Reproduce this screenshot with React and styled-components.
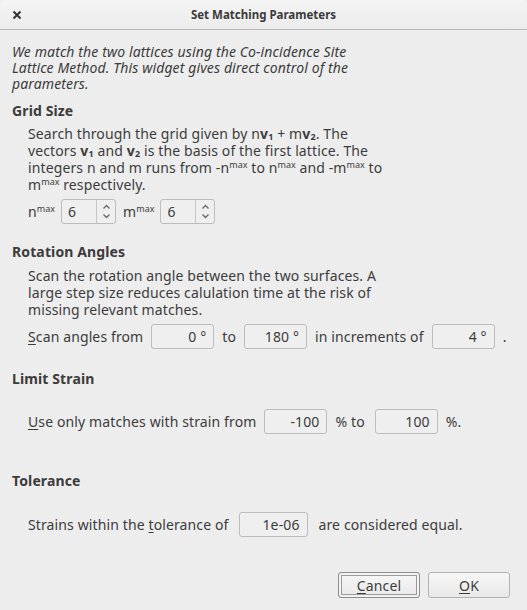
import React from "react";
import styled, { createGlobalStyle } from "styled-components";

const Global = createGlobalStyle`
  html, body { margin: 0; padding: 0; background: #ededed; }
  body {
    font-family: "Noto Sans", "DejaVu Sans", sans-serif;
    font-size: 14px;
    letter-spacing: 0.12px;
    color: #3c3c3c;
  }
`;

const Window = styled.div`
  width: 527px;
  height: 610px;
  display: flex;
  flex-direction: column;
  background: #ededed;
  overflow: hidden;
`;

const TitleBar = styled.div`
  height: 30px;
  flex: none;
  display: grid;
  grid-template-columns: 34px 1fr 34px;
  align-items: center;
  background: linear-gradient(#f4f4f4, #ececec);
  border-bottom: 1px solid #b8b8b8;
  border-radius: 5px 5px 0 0;
  box-sizing: border-box;
`;

const Close = styled.div`
  display: flex;
  justify-content: center;
  color: #3a3a3a;
`;

const Title = styled.div`
  text-align: center;
  font-weight: 700;
  font-size: 11.5px;
  letter-spacing: 0;
  color: #3a3a3a;
`;

const Body = styled.div`
  flex: 1;
  display: flex;
  flex-direction: column;
  padding: 14px 12px 12px;
`;

const Intro = styled.p`
  margin: 0;
  font-style: italic;
  line-height: 16px;
  white-space: nowrap;
`;

const Heading = styled.h2`
  margin: ${(p) => p.$top}px 0 0;
  font-size: 14px;
  font-weight: 700;
  line-height: 16px;
  color: #3c3c3c;
`;

const Para = styled.p`
  margin: ${(p) => p.$top || 6}px 0 0 16px;
  line-height: 17px;
  white-space: nowrap;
`;

const Row = styled.div`
  display: flex;
  align-items: center;
  margin: ${(p) => p.$top}px 0 0 16px;
  height: 25px;
`;

const Label = styled.span`
  margin-right: ${(p) => p.$gap || 8}px;
  white-space: nowrap;
`;

const Sup = styled.sup`
  font-size: 9px;
  letter-spacing: 0;
  vertical-align: 5px;
  line-height: 0;
`;

const Sub = styled.sub`
  font-size: 9px;
  vertical-align: -1px;
  line-height: 0;
`;

const Field = styled.div`
  box-sizing: border-box;
  width: ${(p) => p.$w}px;
  height: 25px;
  border: 1px solid #bcbcbc;
  border-radius: 3px;
  background: #efefef;
  display: flex;
  align-items: center;
  justify-content: flex-end;
  padding: 0 7px;
  margin-right: ${(p) => p.$gap || 8}px;
`;

const Spin = styled.div`
  box-sizing: border-box;
  width: 55px;
  height: 25px;
  border: 1px solid #bcbcbc;
  border-radius: 3px;
  background: #efefef;
  display: grid;
  grid-template-columns: 1fr 19px;
  margin-right: 7px;
`;

const SpinValue = styled.div`
  display: flex;
  align-items: center;
  padding-left: 6px;
`;

const SpinArrows = styled.div`
  border-left: 1px solid #c6c6c6;
  display: flex;
  flex-direction: column;
  align-items: center;
  justify-content: space-around;
  padding: 2px 0;
`;

const U = styled.span`
  text-decoration: underline;
  text-underline-offset: 2px;
`;

const Footer = styled.div`
  margin-top: auto;
  display: flex;
  justify-content: flex-end;
  gap: 8px;
  padding-right: 5px;
`;

const Button = styled.button`
  box-sizing: border-box;
  width: 82px;
  height: 26px;
  font: inherit;
  letter-spacing: inherit;
  color: #3c3c3c;
  border: 1px solid ${(p) => (p.$focus ? "#8e8e8e" : "#b2b2b2")};
  border-radius: 3px;
  background: linear-gradient(#f7f7f7, #e8e8e8);
  box-shadow: ${(p) => (p.$focus ? "inset 0 0 0 2px #f3f3f3, inset 0 0 0 3px #9a9a9a" : "none")};
  padding: 0;
`;

const Arrow = ({ up }) => (
  <svg width="9" height="6" viewBox="0 0 9 6">
    <path
      d={up ? "M1.5 4.5 L4.5 1.5 L7.5 4.5" : "M1.5 1.5 L4.5 4.5 L7.5 1.5"}
      fill="none"
      stroke="#6a6a6a"
      strokeWidth="1.4"
    />
  </svg>
);

const SpinBox = ({ value }) => (
  <Spin>
    <SpinValue>{value}</SpinValue>
    <SpinArrows>
      <Arrow up />
      <Arrow />
    </SpinArrows>
  </Spin>
);

const Max = () => <Sup>max</Sup>;

const V = ({ n }) => (
  <b>
    v<Sub>{n}</Sub>
  </b>
);

export default function App() {
  return (
    <>
      <Global />
      <Window>
        <TitleBar>
          <Close>
            <svg width="10" height="10" viewBox="0 0 10 10">
              <path d="M1.5 1.5 L8.5 8.5 M8.5 1.5 L1.5 8.5" stroke="#333" strokeWidth="2" />
            </svg>
          </Close>
          <Title>Set Matching Parameters</Title>
          <span />
        </TitleBar>
        <Body>
          <Intro>
            We match the two lattices using the Co-incidence Site
            <br />
            Lattice Method. This widget gives direct control of the
            <br />
            parameters.
          </Intro>

          <Heading $top={11}>Grid Size</Heading>
          <Para>
            Search through the grid given by n<V n={1} /> + m<V n={2} />. The
            <br />
            vectors <V n={1} /> and <V n={2} /> is the basis of the first lattice. The
            <br />
            integers n and m runs from -n<Max /> to n<Max /> and -m<Max /> to
            <br />
            m<Max /> respectively.
          </Para>
          <Row $top={6}>
            <Label $gap={6}>
              n<Max />
            </Label>
            <SpinBox value="6" />
            <Label $gap={6}>
              m<Max />
            </Label>
            <SpinBox value="6" />
          </Row>

          <Heading $top={20}>Rotation Angles</Heading>
          <Para $top={7}>
            Scan the rotation angle between the two surfaces. A
            <br />
            large step size reduces calulation time at the risk of
            <br />
            missing relevant matches.
          </Para>
          <Row $top={6}>
            <Label>
              <U>S</U>can angles from
            </Label>
            <Field $w={63}>0 °</Field>
            <Label>to</Label>
            <Field $w={63}>180 °</Field>
            <Label>in increments of</Label>
            <Field $w={63}>4 °</Field>
            <Label>.</Label>
          </Row>

          <Heading $top={22}>Limit Strain</Heading>
          <Row $top={22}>
            <Label>
              <U>U</U>se only matches with strain from
            </Label>
            <Field $w={63}>-100</Field>
            <Label $gap={10}>% to</Label>
            <Field $w={63}>100</Field>
            <Label>%.</Label>
          </Row>

          <Heading $top={39}>Tolerance</Heading>
          <Row $top={23}>
            <Label $gap={10}>
              Strains within the <U>t</U>olerance of
            </Label>
            <Field $w={69} $gap={11}>
              1e-06
            </Field>
            <Label>are considered equal.</Label>
          </Row>

          <Footer>
            <Button $focus>
              <U>C</U>ancel
            </Button>
            <Button>
              <U>O</U>K
            </Button>
          </Footer>
        </Body>
      </Window>
    </>
  );
}
